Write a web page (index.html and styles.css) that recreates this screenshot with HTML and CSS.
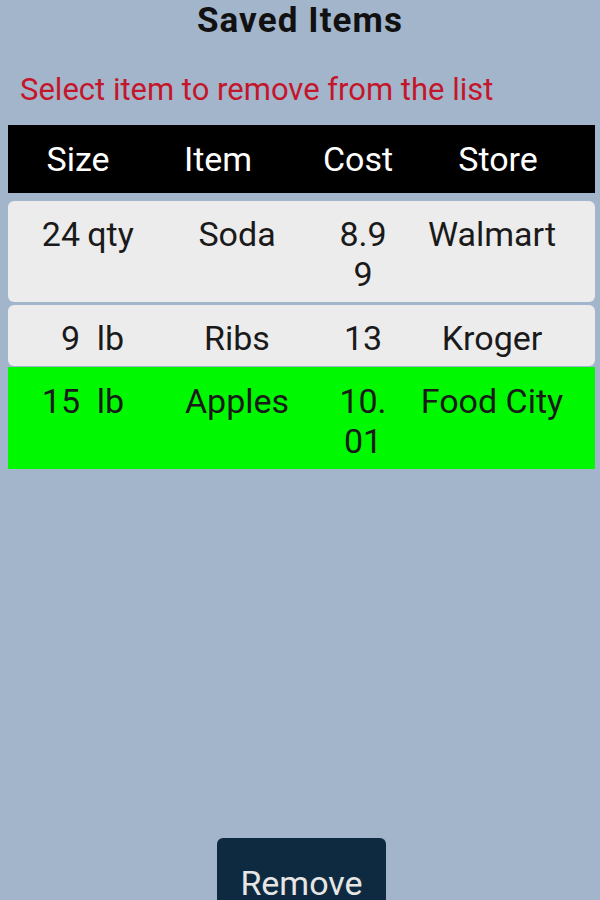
FILE: index.html
```html
<!DOCTYPE html>
<html>
<head>
<meta charset="utf-8">
<link rel="stylesheet" href="styles.css">
</head>
<body>
<div class="page">
  <h1 class="title">Saved Items</h1>
  <p class="hint">Select item to remove from the list</p>
  <div class="head">
    <span>Size</span><span>Item</span><span>Cost</span><span>Store</span>
  </div>
  <div class="list">
    <div class="row">
      <span class="c-qty">24</span>
      <span class="c-unit">qty</span>
      <span class="c-item">Soda</span>
      <span class="c-cost"><span class="num">8.99</span></span>
      <span class="c-store">Walmart</span>
    </div>
    <div class="row">
      <span class="c-qty">9</span>
      <span class="c-unit">lb</span>
      <span class="c-item">Ribs</span>
      <span class="c-cost"><span class="num">13</span></span>
      <span class="c-store">Kroger</span>
    </div>
    <div class="row selected">
      <span class="c-qty">15</span>
      <span class="c-unit">lb</span>
      <span class="c-item">Apples</span>
      <span class="c-cost"><span class="num">10.01</span></span>
      <span class="c-store">Food City</span>
    </div>
  </div>
  <div class="actions">
    <button class="remove">Remove</button>
  </div>
</div>
</body>
</html>
```
FILE: styles.css
```css
html, body {
  margin: 0;
  padding: 0;
  height: 900px;
  overflow: hidden;
}
body {
  background: #a2b5cb;
  font-family: Roboto, "Liberation Sans", sans-serif;
}
.page {
  height: 900px;
  display: flex;
  flex-direction: column;
}
.title {
  margin: 1px 0 0;
  font-size: 35px;
  line-height: 40px;
  font-weight: 700;
  letter-spacing: 1.1px;
  text-align: center;
  color: #111;
}
.hint {
  margin: 31px 0 0;
  padding-left: 20px;
  font-size: 31px;
  line-height: 36px;
  color: #c4162a;
}
.head {
  margin: 17px 5px 0 8px;
  height: 68px;
  background: #000;
  color: #fff;
  display: grid;
  grid-template-columns: 140px 140px 140px 140px;
  align-items: center;
  font-size: 34px;
  line-height: 40px;
  text-align: center;
}
.list {
  margin: 8px 5px 0 8px;
  display: flex;
  flex-direction: column;
  gap: 3px;
}
.row {
  background: #ececec;
  border-radius: 6px;
  padding: 13px 0 8px;
  display: grid;
  grid-template-columns: 72px 61px 192px 60px 198px;
  font-size: 34px;
  line-height: 40px;
  color: #1a1a1a;
  text-align: center;
}
.row.selected {
  background: #00f800;
  border-radius: 0;
  margin-top: -2px;
  padding-top: 14px;
}
.c-qty {
  text-align: right;
}
.c-cost {
  display: flex;
  justify-content: center;
}
.num {
  width: 56px;
  word-break: break-all;
  text-align: center;
}
.actions {
  margin-top: auto;
  display: flex;
  justify-content: center;
  padding-left: 3px;
}
.remove {
  width: 169px;
  height: 80px;
  margin-bottom: -18px;
  border: none;
  border-radius: 6px;
  background: #0e2a40;
  color: #e6e6e6;
  font-family: Roboto, "Liberation Sans", sans-serif;
  font-size: 34px;
  line-height: 40px;
  padding: 25px 0 0;
  display: flex;
  justify-content: center;
  align-items: flex-start;
}
```
